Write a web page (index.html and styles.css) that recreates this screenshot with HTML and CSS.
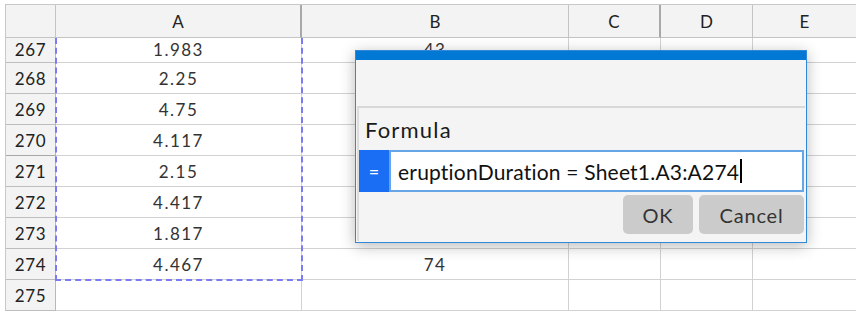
FILE: index.html
```html
<!DOCTYPE html>
<html lang="en">
<head>
  <meta charset="UTF-8" />
  <title>Sheet - Formula</title>
  <link rel="stylesheet" href="styles.css">
</head>
<body>
  <div class="sheet">
    <div class="head">
      <div class="corner"></div>
      <div class="col-h sep-dark">A</div>
      <div class="col-h">B</div>
      <div class="col-h sep-dark">C</div>
      <div class="col-h">D</div>
      <div class="col-h last">E</div>
    </div>

    <div class="rows">
      <div class="row first"><div class="rh">267</div><div class="cell">1.983</div><div class="cell">43</div><div class="cell"></div><div class="cell"></div><div class="cell last"></div></div>
      <div class="row"><div class="rh">268</div><div class="cell">2.25</div><div class="cell"></div><div class="cell"></div><div class="cell"></div><div class="cell last"></div></div>
      <div class="row"><div class="rh">269</div><div class="cell">4.75</div><div class="cell"></div><div class="cell"></div><div class="cell"></div><div class="cell last"></div></div>
      <div class="row"><div class="rh">270</div><div class="cell">4.117</div><div class="cell"></div><div class="cell"></div><div class="cell"></div><div class="cell last"></div></div>
      <div class="row"><div class="rh active">271</div><div class="cell">2.15</div><div class="cell"></div><div class="cell"></div><div class="cell"></div><div class="cell last"></div></div>
      <div class="row"><div class="rh">272</div><div class="cell">4.417</div><div class="cell"></div><div class="cell"></div><div class="cell"></div><div class="cell last"></div></div>
      <div class="row"><div class="rh">273</div><div class="cell">1.817</div><div class="cell"></div><div class="cell"></div><div class="cell"></div><div class="cell last"></div></div>
      <div class="row"><div class="rh">274</div><div class="cell">4.467</div><div class="cell">74</div><div class="cell"></div><div class="cell"></div><div class="cell last"></div></div>
      <div class="row"><div class="rh">275</div><div class="cell"></div><div class="cell"></div><div class="cell"></div><div class="cell"></div><div class="cell last"></div></div>
      <div class="copy-range"></div>
    </div>
  </div>

  <div class="dialog">
    <div class="dialog-title"></div>
    <div class="dialog-top"></div>
    <div class="dialog-panel">
      <label class="field-label">Formula</label>
      <div class="formula-row">
        <span class="eq">=</span>
        <div class="formula-input">eruptionDuration = Sheet1.A3:A274<span class="caret"></span></div>
      </div>
      <div class="buttons">
        <button class="btn ok">OK</button>
        <button class="btn cancel">Cancel</button>
      </div>
    </div>
  </div>
</body>
</html>
```

FILE: styles.css
```css
body {
  margin: 0;
  background: #fff;
  font-family: Lato, "Open Sans", sans-serif;
  color: #222;
  overflow: hidden;
}
.sheet {
  margin: 4px 0 0 5px;
  border-top: 1px solid #c8c8c8;
  border-left: 1px solid #c8c8c8;
}
.head, .row {
  display: grid;
  grid-template-columns: 50px 246px 267px 92px 92px 1fr;
}
.head {
  height: 33px;
  background: #f3f3f3;
}
.corner, .col-h {
  border-right: 1px solid #c4c4c4;
  border-bottom: 1px solid #c4c4c4;
}
.col-h {
  display: flex;
  align-items: center;
  justify-content: center;
  font-size: 17px;
  color: #222;
}
.col-h.sep-dark {
  border-right: 2px solid #a8a8a8;
}
.col-h.last {
  border-right: none;
}
.rows {
  position: relative;
}
.row {
  height: 31px;
}
.row.first {
  height: 25px;
}
.rh, .cell {
  display: flex;
  align-items: center;
  justify-content: center;
  font-size: 17px;
  border-bottom: 1px solid #d2d2d2;
  border-right: 1px solid #d2d2d2;
}
.row.first .rh, .row.first .cell {
  padding-bottom: 2px;
}
.rh {
  background: #f3f3f3;
  border-right: 1px solid #b8b8b8;
  border-bottom: 1px solid #bdbdbd;
  color: #222;
  letter-spacing: 0.6px;
}
.rh.active {
  border-top: 1px solid #a8a8a8;
  margin-top: -1px;
}
.cell {
  color: #333;
  letter-spacing: 1.5px;
}
.cell.last {
  border-right: none;
}
.copy-range {
  position: absolute;
  left: 49px;
  top: -10px;
  width: 248px;
  height: 253px;
  box-sizing: border-box;
  border: 2px dashed #7c7cf2;
  pointer-events: none;
}
.head {
  position: relative;
  z-index: 2;
}
.dialog {
  position: absolute;
  left: 355px;
  top: 50px;
  width: 450px;
  height: 191px;
  border: 1px solid #2f88d8;
  background: #f4f4f4;
  box-shadow: 0 3px 14px rgba(0, 0, 0, 0.28);
  display: flex;
  flex-direction: column;
  z-index: 5;
}
.dialog-title {
  height: 9px;
  background: #0078d4;
}
.dialog-top {
  height: 46px;
}
.dialog-panel {
  flex: 1;
  margin: 0 1px 1px 1px;
  border-top: 2px solid #d8d8d8;
  border-left: 2px solid #dcdcdc;
  display: flex;
  flex-direction: column;
}
.field-label {
  font-size: 22px;
  letter-spacing: 1.2px;
  color: #1a1a1a;
  padding: 8px 0 0 6px;
  height: 34px;
}
.formula-row {
  display: flex;
  height: 42px;
  margin-right: 1px;
}
.eq {
  width: 30px;
  background: #1a6ef4;
  color: #fff;
  font-size: 18px;
  display: flex;
  align-items: center;
  justify-content: center;
}
.formula-input {
  flex: 1;
  background: #fff;
  border: 2px solid #66a6e6;
  font-size: 21px;
  letter-spacing: 0.2px;
  color: #111;
  padding: 0 0 0 7px;
  display: flex;
  align-items: center;
}
.caret {
  display: inline-block;
  width: 2px;
  height: 24px;
  background: #000;
  margin-left: 1px;
}
.buttons {
  display: flex;
  justify-content: flex-end;
  gap: 6px;
  margin: 3px 1px 0 0;
}
.btn {
  height: 39px;
  border: none;
  border-radius: 5px;
  background: #cbcbcb;
  color: #333;
  font-family: Lato, "Open Sans", sans-serif;
  font-size: 20px;
  letter-spacing: 0.8px;
}
.btn.ok {
  width: 70px;
}
.btn.cancel {
  width: 105px;
}
```
